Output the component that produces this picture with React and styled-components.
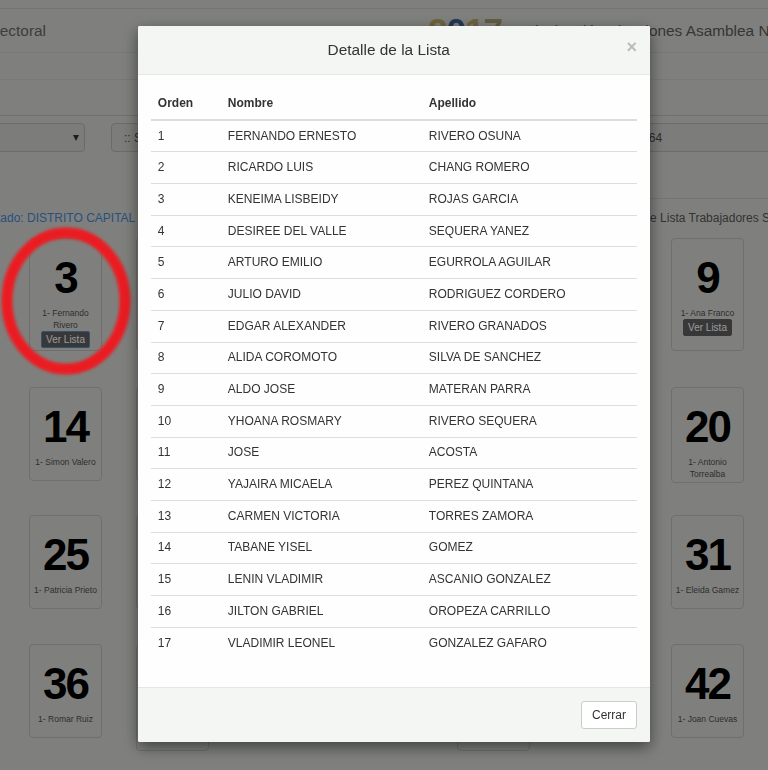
import React from 'react';
import styled, { createGlobalStyle } from 'styled-components';

const GlobalStyle = createGlobalStyle`
  * { box-sizing: border-box; }
  html, body { margin: 0; padding: 0; }
  body {
    width: 768px;
    height: 770px;
    overflow: hidden;
    background: #d4d6d0;
    font-family: "Liberation Sans", Arial, sans-serif;
    color: #333;
  }
`;

const candidates = [
    { n: 3, name: '1- Fernando Rivero', button: true, focus: true },
    { n: 4, name: '1- Luis Medina', button: true },
    { n: 5, name: '1- Carlos Rojas', button: true },
    { n: 6, name: '1- Ana Blanco', button: true },
    { n: 7, name: '1- Jose Perez', button: true },
    { n: 8, name: '1- Maria Lopez', button: true },
    { n: 9, name: '1- Ana Franco', button: true },
    { n: 14, name: '1- Simon Valero' },
    { n: 15, name: '1- Pedro Suarez' },
    { n: 16, name: '1- Rosa Vargas' },
    { n: 17, name: '1- Juan Marquez' },
    { n: 18, name: '1- Elsa Mora' },
    { n: 19, name: '1- Luis Rivas' },
    { n: 20, name: '1- Antonio Torrealba' },
    { n: 25, name: '1- Patricia Prieto' },
    { n: 26, name: '1- Omar Silva' },
    { n: 27, name: '1- Nelly Paez' },
    { n: 28, name: '1- Ivan Leon' },
    { n: 29, name: '1- Gladys Rey' },
    { n: 30, name: '1- Hugo Diaz' },
    { n: 31, name: '1- Eleida Gamez' },
    { n: 36, name: '1- Romar Ruiz' },
    { n: 37, name: '1- Carmen Elena Rodríguez', long: true },
    { n: 38, name: '1- Jorge Peña' },
    { n: 39, name: '1- Dora Gil' },
    { n: 40, name: '1- Nelson Antonio Marcano', long: true },
    { n: 41, name: '1- Raul Soto' },
    { n: 42, name: '1- Joan Cuevas' }
];

const members = [
    ['FERNANDO ERNESTO', 'RIVERO OSUNA'],
    ['RICARDO LUIS', 'CHANG ROMERO'],
    ['KENEIMA LISBEIDY', 'ROJAS GARCIA'],
    ['DESIREE DEL VALLE', 'SEQUERA YANEZ'],
    ['ARTURO EMILIO', 'EGURROLA AGUILAR'],
    ['JULIO DAVID', 'RODRIGUEZ CORDERO'],
    ['EDGAR ALEXANDER', 'RIVERO GRANADOS'],
    ['ALIDA COROMOTO', 'SILVA DE SANCHEZ'],
    ['ALDO JOSE', 'MATERAN PARRA'],
    ['YHOANA ROSMARY', 'RIVERO SEQUERA'],
    ['JOSE', 'ACOSTA'],
    ['YAJAIRA MICAELA', 'PEREZ QUINTANA'],
    ['CARMEN VICTORIA', 'TORRES ZAMORA'],
    ['TABANE YISEL', 'GOMEZ'],
    ['LENIN VLADIMIR', 'ASCANIO GONZALEZ'],
    ['JILTON GABRIEL', 'OROPEZA CARRILLO'],
    ['VLADIMIR LEONEL', 'GONZALEZ GAFARO']
];

const minHeightOf = (c) => {
    if (c.button) return 113;
    if (c.long) return 107;
    return 94;
};

const App = () => (
    <>
        <GlobalStyle />
        <Page>
            <TopStrip />
            <Header>
                <Brand>Consejo Nacional Electoral</Brand>
                <span />
                <Logo>
                    <Digit $color="#b9a666">2</Digit>
                    <Digit $color="#3d5d8f">0</Digit>
                    <Digit $color="#b9a666">1</Digit>
                    <Digit $color="#a39a6e">7</Digit>
                </Logo>
                <SiteTitle>Divulgación Elecciones Asamblea Nacional Constituyente</SiteTitle>
            </Header>
            <SubNav />
            <Toolbar />
            <FilterRow>
                <Select $w={160} $offset={-75}>
                    <span>Territorial</span>
                    <Caret />
                </Select>
                <Select $w={422}>
                    <span>:: Seleccione ::</span>
                    <Caret />
                </Select>
                <Select $w={248}>
                    <span>Votos: 1.180.564</span>
                </Select>
            </FilterRow>
            <LabelRow>
                <StateLabel>Estado: DISTRITO CAPITAL | Municipio: LIBERTADOR</StateLabel>
                <SectorLabel>Resultado de Lista Trabajadores Sectoriales</SectorLabel>
            </LabelRow>
            <CardGrid>
                {candidates.map((c) => (
                    <Card key={c.n} $minH={minHeightOf(c)}>
                        <Num>{c.n}</Num>
                        <Name>{c.name}</Name>
                        {c.button && <ListButton $focus={c.focus}>Ver Lista</ListButton>}
                    </Card>
                ))}
            </CardGrid>
        </Page>

        <Backdrop>
            <Ring width="140" height="170" viewBox="0 0 140 170">
                <defs>
                    <filter id="soft">
                        <feGaussianBlur stdDeviation="1.4" />
                    </filter>
                </defs>
                <ellipse cx="66" cy="81" rx="59" ry="68" fill="none" stroke="#ea1c24" strokeWidth="11" filter="url(#soft)" />
            </Ring>
        </Backdrop>

        <Dialog>
            <ModalHeader>
                <ModalTitle>Detalle de la Lista</ModalTitle>
                <CloseX>×</CloseX>
            </ModalHeader>
            <ModalBody>
                <Table>
                    <thead>
                        <tr>
                            <Th $w="70px">Orden</Th>
                            <Th $w="201px">Nombre</Th>
                            <Th>Apellido</Th>
                        </tr>
                    </thead>
                    <tbody>
                        {members.map(([first, last], i) => (
                            <tr key={first + last}>
                                <Td>{i + 1}</Td>
                                <Td>{first}</Td>
                                <Td>{last}</Td>
                            </tr>
                        ))}
                    </tbody>
                </Table>
            </ModalBody>
            <ModalFooter>
                <FooterButton>Cerrar</FooterButton>
            </ModalFooter>
        </Dialog>
    </>
);

const Page = styled.div`
    width: 768px;
    height: 770px;
    overflow: hidden;
`;

const TopStrip = styled.div`
    height: 9px;
    border-bottom: 1px solid #c2c4be;
`;

const Header = styled.div`
    height: 44px;
    border-bottom: 1px solid #c9cbc5;
    display: grid;
    grid-template-columns: 46px 382px 96px 1fr;
    align-items: center;
    overflow: hidden;
`;

const Brand = styled.div`
    display: flex;
    justify-content: flex-end;
    overflow: hidden;
    white-space: nowrap;
    font-size: 15.4px;
    color: #666;
`;

const Logo = styled.div`
    font-size: 35px;
    line-height: 35px;
    font-weight: bold;
    letter-spacing: -1px;
`;

const Digit = styled.span`
    color: ${(p) => p.$color};
`;

const SiteTitle = styled.div`
    white-space: nowrap;
    overflow: hidden;
    font-size: 15.4px;
    color: #5a5a5a;
`;

const SubNav = styled.div`
    height: 27px;
    border-bottom: 1px solid #c9cbc5;
`;

const Toolbar = styled.div`
    height: 36px;
    border-bottom: 1px solid #b9bbb5;
`;

const FilterRow = styled.div`
    display: flex;
    gap: 26px;
    margin-top: 7px;
    overflow: hidden;
`;

const Select = styled.div`
    flex: none;
    width: ${(p) => p.$w}px;
    margin-left: ${(p) => p.$offset || 0}px;
    height: 29px;
    padding: 0 5px 0 12px;
    display: flex;
    align-items: center;
    justify-content: space-between;
    border: 1px solid #b3b4af;
    border-radius: 4px;
    background: #cfd0cb;
    font-size: 12px;
    color: #4a4a4a;
`;

const Caret = styled.span`
    width: 0;
    height: 0;
    border-left: 3.5px solid transparent;
    border-right: 3.5px solid transparent;
    border-top: 6px solid #333;
`;

const LabelRow = styled.div`
    margin-top: 46px;
    height: 40px;
    display: grid;
    grid-template-columns: 586px 1fr;
    font-size: 12px;
    line-height: 17px;
    white-space: nowrap;
    overflow: hidden;
`;

const StateLabel = styled.div`
    padding-top: 12px;
    margin-left: -17px;
    color: #4385d0;
`;

const SectorLabel = styled.div`
    padding-top: 11px;
    border-top: 1px solid #c2c4be;
    color: #555;
`;

const CardGrid = styled.div`
    display: grid;
    grid-template-columns: repeat(7, 73px);
    grid-template-rows: 116px 95px 96px auto;
    column-gap: 34px;
    row-gap: 33px;
    align-items: start;
    padding-left: 29px;
`;

const Card = styled.div`
    min-height: ${(p) => p.$minH}px;
    padding: 17px 3px 2px;
    border: 1px solid #b9bab5;
    border-radius: 4px;
    text-align: center;
`;

const Num = styled.div`
    font-size: 44px;
    line-height: 44px;
    font-weight: bold;
    letter-spacing: -2px;
    color: #000;
`;

const Name = styled.div`
    margin-top: 7px;
    font-size: 8.5px;
    line-height: 12px;
    color: #4d4d4d;
`;

const ListButton = styled.button`
    display: block;
    margin: 0 auto;
    padding: 2px 4px 1px;
    font-family: inherit;
    font-size: 10px;
    line-height: 12px;
    color: #fff;
    background: #5e5e5e;
    border: 1px solid ${(p) => (p.$focus ? '#5b86c4' : '#5e5e5e')};
    border-radius: 2px;
`;

const Backdrop = styled.div`
    position: fixed;
    inset: 0;
    background: rgba(0, 0, 0, 0.4);
`;

const Ring = styled.svg`
    position: absolute;
    left: 0;
    top: 220px;
`;

const Dialog = styled.div`
    position: fixed;
    top: 26px;
    left: 138px;
    width: 512px;
    background: #fdfefd;
    border-radius: 2px;
    box-shadow: 0 5px 15px rgba(0, 0, 0, 0.5);
    overflow: hidden;
`;

const ModalHeader = styled.div`
    display: flex;
    align-items: center;
    padding: 13px;
    background: #f4f6f4;
    border-bottom: 1px solid #e5e7e5;
`;

const ModalTitle = styled.h4`
    flex: 1;
    margin: 0;
    text-align: center;
    font-size: 15.4px;
    line-height: 22px;
    font-weight: normal;
    color: #333;
`;

const CloseX = styled.button`
    margin-top: -6px;
    padding: 0;
    border: 0;
    background: none;
    font-family: inherit;
    font-size: 18px;
    line-height: 18px;
    font-weight: bold;
    color: #bbb;
`;

const ModalBody = styled.div`
    padding: 13px;
`;

const Table = styled.table`
    width: 100%;
    margin-bottom: 16px;
    border-collapse: collapse;
    font-size: 12px;
    color: #333;
`;

const Th = styled.th`
    width: ${(p) => p.$w || 'auto'};
    padding: 6.85px;
    line-height: 17px;
    text-align: left;
    font-weight: bold;
    border-bottom: 2px solid #ddd;
`;

const Td = styled.td`
    padding: 6.85px;
    line-height: 17px;
    border-top: 1px solid #ddd;
`;

const ModalFooter = styled.div`
    padding: 13px;
    text-align: right;
    background: #f4f6f4;
    border-top: 1px solid #e5e7e5;
`;

const FooterButton = styled.button`
    padding: 4.5px 10px;
    font-family: inherit;
    font-size: 12px;
    line-height: 17px;
    color: #333;
    background: #fff;
    border: 1px solid #ccc;
    border-radius: 3px;
`;

export default App;
